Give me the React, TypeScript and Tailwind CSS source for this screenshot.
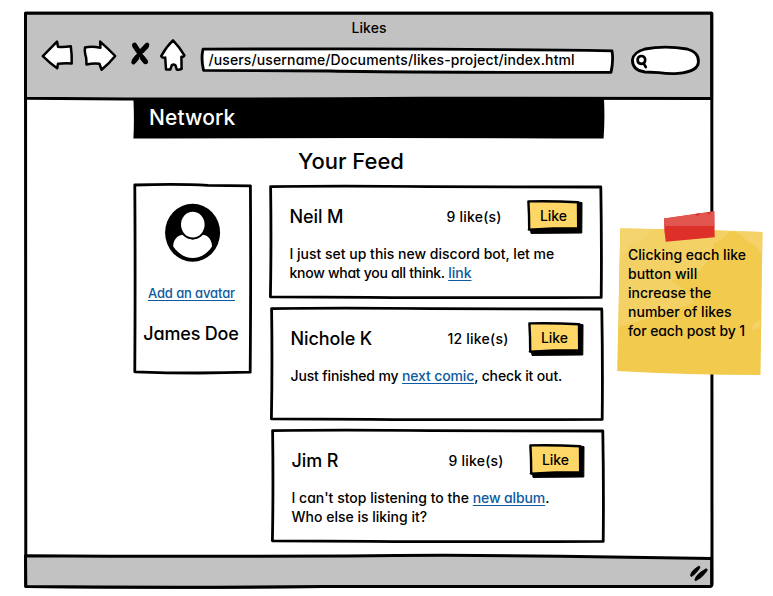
import React from "react";

type OutlineProps = { viewBox: string; d: string; fill?: string; stroke?: number };

// Hand-drawn border that fills its positioned parent.
function Outline({ viewBox, d, fill = "white", stroke = 2.8 }: OutlineProps) {
  return (
    <svg className="absolute inset-0 h-full w-full overflow-visible" viewBox={viewBox} preserveAspectRatio="none" aria-hidden="true">
      <path d={d} fill={fill} stroke="black" strokeWidth={stroke} strokeLinejoin="round" strokeLinecap="round" />
    </svg>
  );
}

function NavIcons() {
  return (
    <>
      <svg className="h-[32px] w-[32px] shrink-0 overflow-visible" viewBox="0 0 32 32" fill="white" stroke="black" strokeWidth="2.5" strokeLinejoin="round">
        <path d="M1.8 15.2 L16 .6 L17 5.8 Q23 6.4 29.8 5.2 Q31 14 30.7 22.5 Q24 21.8 17 22.8 L16.2 27.2 Q9 22.4 1.8 15.2Z" />
      </svg>
      <svg className="ml-[10px] h-[32px] w-[32px] shrink-0 overflow-visible" viewBox="0 0 32 32" fill="white" stroke="black" strokeWidth="2.5" strokeLinejoin="round">
        <path d="M2 6.4 Q9 5 17.4 6.8 L17.2 .6 Q25 7.5 32.2 15 Q26 22.6 18.6 28.8 L16.4 22.8 Q10 22.2 3.4 23.4 Q3.6 17 2.4 14 Q1.4 10 2 6.4Z" />
      </svg>
      <svg className="ml-[15px] h-[32px] w-[20px] shrink-0 overflow-visible" viewBox="0 0 20 32" fill="none" stroke="black" strokeLinecap="round">
        <path d="M4.4 3.6 Q8.6 12 16 21" strokeWidth="4.2" />
        <path d="M17.2 3.8 Q9 12 3.4 21.4" strokeWidth="4.2" />
        <path d="M4.8 4.8 L7.8 9.4 M16.4 5.2 L12 9.8 M12.6 17.2 L15.2 20.4 M4.4 19.6 L6.6 16.8" strokeWidth="5.2" />
      </svg>
      <svg className="ml-[9px] h-[32px] w-[28px] shrink-0 overflow-visible" viewBox="0 0 28 32" fill="white" stroke="black" strokeWidth="2.5" strokeLinejoin="round">
        <path d="M14 -.6 Q20.4 6 25.4 14.4 Q24.4 16.4 22.4 15.8 L22.6 27.8 Q20 29.2 17.8 28.6 L16.4 24.2 Q14.4 23 12.8 24.2 L11.4 28.4 H7 L6.2 16.6 Q3.4 17.4 2.2 15.2 Q7 6 14 -.6Z" />
      </svg>
    </>
  );
}

function BrowserBar() {
  return (
    <header className="relative h-[87px] pt-[6px]">
      <Outline viewBox="0 0 690 87" fill="#c2c2c2" d="M1.5 1.3 H687.6 V86.6 L400 86.2 Q200 88 1.5 86.2Z" stroke={3} />
      <h1 className="relative text-center text-[14px] leading-5 tracking-[0.1px]">Likes</h1>
      <div className="relative mt-[3px] ml-[17px] flex h-[34px]">
        <NavIcons />
        <div className="relative ml-[14px] h-[32px] w-[413px] pt-[9px] pl-[7.5px]">
          <Outline viewBox="0 0 413 32" d="M2 8.2 Q200 7.4 300 8.6 Q360 8.8 411 9.8 Q412.6 20 410 31.4 Q200 31.4 130 30 Q60 29.4 2.6 29.4 Q-.2 18 2 8.2Z" />
          <span className="relative block text-[14px] leading-5 tracking-[0.12px] whitespace-nowrap">/users/username/Documents/likes-project/index.html</span>
        </div>
        <svg className="ml-[17px] h-[34px] w-[70px] overflow-visible" viewBox="0 0 70 34" fill="none" stroke="black" strokeLinecap="round">
          <path d="M14 8 Q34 4.4 56 8 Q67.6 11 67.4 20 Q68 30.6 47 32.4 Q38 33.2 28 31.6 L14 31 Q1.4 29.6 1.4 19 Q2.4 11 14 8Z" fill="white" strokeWidth="2.8" />
          <path d="M10.2 15 C5.4 15.6 5.4 22.6 10.2 22.8 C15.6 22.4 15.4 14.8 10.2 15Z M12.6 22.4 L14.8 26" strokeWidth="2.7" />
        </svg>
      </div>
    </header>
  );
}

function TextLink({ children }: { children: React.ReactNode }) {
  return <a className="text-[#0d5aa0] underline decoration-1 underline-offset-[2px] [text-decoration-skip-ink:none]">{children}</a>;
}

function ProfileCard() {
  return (
    <aside className="relative h-[192px] w-[119px] pt-[20px] text-center">
      <Outline viewBox="0 0 119 192" d="M1.8 2 Q45 .6 75 2.4 L117.4 2.8 Q118 90 117.2 189.2 Q60 191 1.8 188.8 Q2.4 90 1.8 2Z" />
      <svg className="relative mx-auto block h-[59px] w-[56px]" viewBox="0 0 56 59">
        <ellipse cx="27.6" cy="29.7" rx="27.5" ry="29" fill="black" />
        <path d="M17.4 31.8 C11.8 32.5 8.2 37.6 8.2 43.5 C13 50.6 20 55 27.6 55 C35.6 55 42.6 50.4 47 43.5 C47 37.8 43.8 32.6 38 31.8 C32.2 38 23.4 38 17.4 31.8Z" fill="white" />
        <ellipse cx="27.8" cy="21.8" rx="13" ry="14.6" fill="black" />
        <ellipse cx="27.8" cy="21.6" rx="11.8" ry="12.9" fill="white" />
      </svg>
      <p className="relative mt-[21px] -ml-[2px] text-[13px] leading-5 tracking-[-0.12px] whitespace-nowrap"><TextLink>Add an avatar</TextLink></p>
      <p className="relative mt-[17px] -ml-[3px] text-[18px] leading-7 tracking-[-0.17px] whitespace-nowrap">James Doe</p>
    </aside>
  );
}

function LikeButton() {
  return (
    <button className="relative block h-[34px] w-[56px] pr-[3px] pb-[2px] text-[14px] leading-5">
      <svg className="absolute inset-0 h-full w-full overflow-visible" viewBox="0 0 56 34" aria-hidden="true">
        <path d="M51 2 L55 2.6 L54.8 33 L4 33.4 L3.6 30 L.8 29.6Z" fill="black" stroke="black" strokeLinejoin="round" />
        <path d="M1.4 1.4 Q25 .8 51 2.2 L51.2 28.2 Q26 28.2 2.2 29.6 Q2.2 14 1.4 1.4Z" fill="#ffd766" stroke="black" strokeWidth="2.4" strokeLinejoin="round" />
      </svg>
      <span className="relative">Like</span>
    </button>
  );
}

type PostProps = { name: string; likes: string; className: string; children: React.ReactNode };

function Post({ name, likes, className, children }: PostProps) {
  return (
    <article className={"relative h-[114px] w-[334px] pt-[15px] pl-[20.5px] " + className}>
      <Outline viewBox="0 0 334 114" d="M1.6 1.6 Q70 .6 160 1.6 L331.8 2 Q332.8 60 332.2 112.4 Q190 113 100 112.4 L1.4 111.8 Q2.4 60 1.6 1.6Z" />
      <div className="relative flex h-[34px] items-center">
        <h3 className="w-[157px] text-[18px] leading-7 tracking-[-0.1px]">{name}</h3>
        <span className="w-[80.5px] text-[14px] leading-5 tracking-[0.22px]">{likes}</span>
        <LikeButton />
      </div>
      <p className="relative mt-[10px] text-[14px] leading-[19px] whitespace-nowrap">{children}</p>
    </article>
  );
}

function StickyNote() {
  return (
    <div className="absolute top-[210px] left-[616px] h-[167px] w-[148px] pt-[36px] pl-[12px]">
      <svg className="absolute inset-0 h-full w-full" viewBox="0 0 148 167" aria-hidden="true">
        <path d="M4.3 18.4 Q70 19 146.5 22 L144.5 165 Q70 164.8 1.2 161Z" fill="#f2ca4d" />
        <path d="M4.3 18.4 Q70 19 114 21 Q110 28 98 33 Q96 48 84 60 Q70 68 54 70 Q70 78 78 92 Q50 104 2.6 117Z" fill="#f4d164" />
        <path d="M5 18.4 L35 19 Q31 32 15 34 L4 49Z M117 20.8 L146.5 22 L146 46 Q140 34 132 32 Q125 24 117 20.8Z M144 110 Q136 112 136 119 Q141 121 144.6 116Z" fill="#f5d674" opacity=".65" />
        <path d="M48 8.4 L98.3 1.3 L98.7 27.3 L49.8 31.8 L48.4 21Z" fill="#dd3028" />
        <path d="M48 8.4 L98.3 1.3 V16 H48Z" fill="#e1574f" />
        <path d="M79 4 Q82 8 84 3.3Z M91 2.4 Q93 7 95 1.8Z" fill="#d92d28" />
      </svg>
      <p className="relative text-[14px] leading-[18.9px] tracking-[0.03px] whitespace-nowrap">
        Clicking each like<br />button will<br />increase the<br />number of likes<br />
        <span className="tracking-[-0.1px]">for each post by 1</span>
      </p>
    </div>
  );
}

export default function App() {
  return (
    <div className="relative h-[596px] w-[773px] overflow-hidden bg-white pt-[12px] pl-[24px] font-['Inter',sans-serif] font-[450] text-black [font-feature-settings:'cv11']">
      <div className="relative flex h-[576px] w-[690px] flex-col">
        <Outline viewBox="0 0 690 576" fill="white" d="M1.5 1.3 H687.8 L688 572 Q688 574.6 685 574.6 H300 Q150 576 1.8 574.6Z" stroke={3} />
        <BrowserBar />
        <main className="relative ml-[109px] h-[457px] w-[472px]">
          <div className="relative h-[40px] pt-[5px] pl-[16px] text-white">
            <svg className="absolute inset-0 h-full w-full" viewBox="0 0 472 40" preserveAspectRatio="none" aria-hidden="true">
              <path d="M.4 0 H471 Q472 20 470.6 39.6 Q300 38.6 .4 39.4 Q1.4 20 .4 0Z" fill="black" />
            </svg>
            <h2 className="relative text-[21px] leading-7 tracking-[0.1px]">Network</h2>
          </div>
          <h2 className="mt-[7px] ml-[165px] text-[22px] leading-[30px]">Your Feed</h2>
          <div className="mt-[7px] flex">
            <ProfileCard />
            <section className="mt-[2px] ml-[17px]">
              <Post name="Neil M" likes="9 like(s)" className="">
                I just set up this new discord bot, let me<br />
                <span className="tracking-[-0.28px]">know what you all think. </span><TextLink>link</TextLink>
              </Post>
              <Post name="Nichole K" likes="12 like(s)" className="mt-[8px] ml-[1px]">
                <span className="tracking-[-0.14px]">Just finished my <TextLink>next comic</TextLink>, check it out.</span>
              </Post>
              <Post name="Jim R" likes="9 like(s)" className="mt-[8px] ml-[2px]">
                <span className="tracking-[0.02px]">I can't stop listening to the </span>
                <span className="tracking-[-0.12px]"><TextLink>new album</TextLink>.</span>
                <br />Who else is liking it?
              </Post>
            </section>
          </div>
        </main>
        <footer className="relative h-[32px]">
          <Outline viewBox="0 0 690 32" fill="#c2c2c2" d="M1.5 -.3 Q200 1 420 -.8 Q560 0 687.6 2.4 V28 Q688 30.6 685 30.6 H300 Q150 32 1.8 30.6Z" stroke={3} />
          <svg className="absolute top-[8px] right-[5px] h-[18px] w-[20px]" viewBox="0 0 20 18" aria-hidden="true" fill="black" stroke="black" strokeWidth=".8" strokeLinejoin="round">
            <path d="M1.6 11.8 Q1.4 9 5 5.6 L9.6 2.2 Q11.8 2.4 10.6 4.4 L7 8.8 Q4 12 2.2 12.6Z M5.8 15.8 Q6.4 12.6 11 8.6 L17 4.8 Q19 4.8 17.8 7 Q15 11 11.6 13.8 Q8.4 16 6.4 16.8Z" />
          </svg>
        </footer>
      </div>
      <StickyNote />
    </div>
  );
}
